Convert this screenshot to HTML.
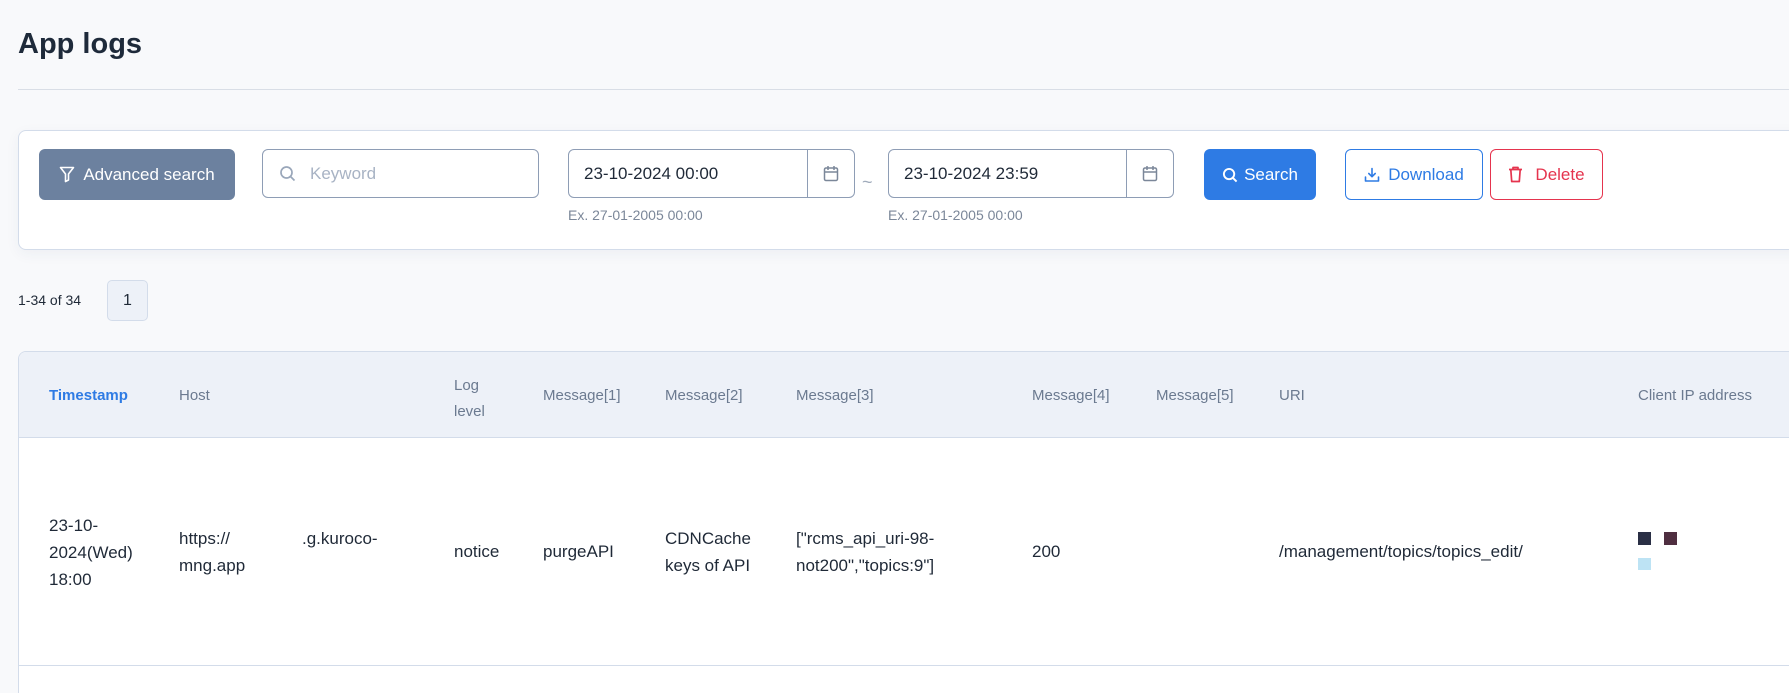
<!DOCTYPE html>
<html style="height:693px;overflow:hidden"><head><meta charset="utf-8"><style>
*{box-sizing:border-box;margin:0;padding:0}
body{width:1789px;height:693px;background:#f8f9fb;font-family:"Liberation Sans",sans-serif;position:relative;overflow:hidden;color:#1f2937}
.a{position:absolute;white-space:nowrap}
h1{position:absolute;left:18px;top:28px;font-size:29px;font-weight:bold;color:#1e2a3a}
.hr{position:absolute;left:18px;right:0;top:89px;height:1px;background:#d9dee6}
.card{position:absolute;left:18px;top:130px;width:1800px;height:120px;background:#fff;border:1px solid #d3dcea;border-radius:8px;box-shadow:0 4px 14px rgba(30,50,90,.05)}
.btn{position:absolute;top:149px;height:51px;border-radius:6px;display:flex;align-items:center;justify-content:center;gap:8px;font-size:17px}
.inp{position:absolute;top:149px;height:49px;border:1px solid #8e9db5;border-radius:6px;background:#fff;font-size:17px;display:flex;align-items:center}
.cal{position:absolute;right:0;top:0;width:47px;height:100%;border-left:1px solid #8e9db5;display:flex;align-items:center;justify-content:center}
.ex{position:absolute;top:207px;font-size:14px;color:#7b8799}
.table{position:absolute;left:18px;top:351px;width:1800px;height:342px;background:#fff;border:1px solid #d3dcea;border-bottom:none;border-radius:8px 0 0 0;overflow:hidden}
.thead{position:absolute;left:0;top:0;right:0;height:86px;background:#edf1f8;border-bottom:1px solid #d3dcea}
.th{position:absolute;font-size:15px;color:#6b7a90;top:35px;white-space:nowrap}
.td{position:absolute;font-size:17px;color:#1f2937;line-height:27px;white-space:nowrap}
</style></head><body>
<h1>App logs</h1>
<div class="hr"></div>
<div class="card"></div>
<div class="btn" style="left:39px;width:196px;background:#6c819f;color:#fff">
<svg width="16" height="17" viewBox="0 0 16 17" fill="none" stroke="#fff" stroke-width="1.6" stroke-linejoin="round"><path d="M1.5 1.5h13l-5 6.5v6l-3 1.5v-7.5z"/></svg>Advanced search</div>
<div class="inp" style="left:262px;width:277px;color:#a8b3c4">
<svg style="margin-left:16px;margin-right:14px" width="17" height="17" viewBox="0 0 17 17" fill="none" stroke="#9aa7ba" stroke-width="1.7"><circle cx="7.5" cy="7.5" r="5.5"/><path d="M11.5 11.5l4 4"/></svg>Keyword</div>
<div class="inp" style="left:568px;width:287px;padding-left:15px;color:#1f2937">23-10-2024 00:00<div class="cal"><svg width="16" height="17" viewBox="0 0 16 17" fill="none" stroke="#7b8799" stroke-width="1.5"><rect x="1.5" y="3" width="13" height="12.5" rx="1.5"/><path d="M1.5 7h13M5 1v4M11 1v4"/></svg></div></div>
<div class="a" style="left:862px;top:172px;font-size:18px;color:#a0abbb">~</div>
<div class="inp" style="left:888px;width:286px;padding-left:15px;color:#1f2937">23-10-2024 23:59<div class="cal"><svg width="16" height="17" viewBox="0 0 16 17" fill="none" stroke="#7b8799" stroke-width="1.5"><rect x="1.5" y="3" width="13" height="12.5" rx="1.5"/><path d="M1.5 7h13M5 1v4M11 1v4"/></svg></div></div>
<div class="ex" style="left:568px">Ex. 27-01-2005 00:00</div>
<div class="ex" style="left:888px">Ex. 27-01-2005 00:00</div>
<div class="btn" style="left:1204px;width:112px;background:#2e7be4;color:#fff;gap:6px">
<svg width="16" height="16" viewBox="0 0 17 17" fill="none" stroke="#fff" stroke-width="2"><circle cx="7.5" cy="7.5" r="5.5"/><path d="M11.5 11.5l4 4"/></svg>Search</div>
<div class="btn" style="left:1345px;width:138px;border:1px solid #2e7be4;color:#2e7be4;background:#fff">
<svg width="16" height="16" viewBox="0 0 16 16" fill="none" stroke="#2e7be4" stroke-width="1.6" stroke-linecap="round" stroke-linejoin="round"><path d="M8 1.5v8M4.8 6.5L8 9.7l3.2-3.2M1.5 10v4h13v-4"/></svg>Download</div>
<div class="btn" style="left:1490px;width:113px;border:1px solid #e5344e;color:#e5344e;background:#fff;gap:12px">
<svg width="15" height="17" viewBox="0 0 15 17" fill="none" stroke="#e5344e" stroke-width="1.7" stroke-linejoin="round"><path d="M1 3.5h13M5 3.5V1.5h5v2M2.8 3.5l.9 12h7.6l.9-12"/></svg>Delete</div>
<div class="a" style="left:18px;top:292px;font-size:14px;color:#1f2937">1-34 of 34</div>
<div class="a" style="left:107px;top:280px;width:41px;height:41px;border:1px solid #d3dcea;background:#edf1f8;border-radius:5px;display:flex;align-items:center;justify-content:center;font-size:16px">1</div>
<div class="table"><div class="thead">
<div class="th" style="left:30px;color:#2e7be4;font-weight:bold">Timestamp</div>
<div class="th" style="left:160px">Host</div>
<div class="th" style="left:435px;top:21px;line-height:26px;white-space:normal">Log<br>level</div>
<div class="th" style="left:524px">Message[1]</div>
<div class="th" style="left:646px">Message[2]</div>
<div class="th" style="left:777px">Message[3]</div>
<div class="th" style="left:1013px">Message[4]</div>
<div class="th" style="left:1137px">Message[5]</div>
<div class="th" style="left:1260px">URI</div>
<div class="th" style="left:1619px">Client IP address</div>
</div>
<div class="td" style="left:30px;top:160px">23-10-<br>2024(Wed)<br>18:00</div>
<div class="td" style="left:160px;top:173px">https://<br>mng.app</div>
<div class="td" style="left:283px;top:173px">.g.kuroco-</div>
<div class="td" style="left:435px;top:186px">notice</div>
<div class="td" style="left:524px;top:186px">purgeAPI</div>
<div class="td" style="left:646px;top:173px">CDNCache<br>keys of API</div>
<div class="td" style="left:777px;top:173px">["rcms_api_uri-98-<br>not200","topics:9"]</div>
<div class="td" style="left:1013px;top:186px">200</div>
<div class="td" style="left:1260px;top:186px">/management/topics/topics_edit/</div>
<div class="a" style="left:1619px;top:180px;width:13px;height:13px;background:#2a2f45"></div>
<div class="a" style="left:1645px;top:180px;width:13px;height:13px;background:#4f2e40"></div>
<div class="a" style="left:1619px;top:206px;width:13px;height:12px;background:#bde3f4"></div>
<div class="a" style="left:0;top:313px;right:0;height:1px;background:#d3dcea"></div>
</div>
</body></html>
